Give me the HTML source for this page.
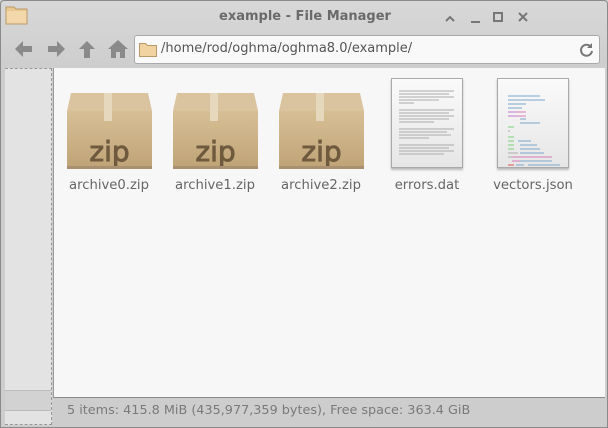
<!DOCTYPE html>
<html><head><meta charset="utf-8"><style>
*{margin:0;padding:0;box-sizing:border-box}
body{width:608px;height:428px;overflow:hidden;background:#d0d0d0;font-family:"DejaVu Sans","Liberation Sans",sans-serif;position:relative}
.win{position:absolute;left:0;top:0;width:608px;height:428px;border:1px solid #8a8a8a;border-radius:4px 4px 0 0;background:linear-gradient(#d8d8d8,#cdcdcd 70px,#cdcdcd)}
.title{position:absolute;top:8px;left:0;width:608px;text-align:center;font-size:13px;font-weight:bold;color:#6a6a6a}
.addr{position:absolute;left:133px;top:34px;width:466px;height:29px;background:#f9f9f9;border:1px solid #aaa;border-radius:3px}
.addr span{position:absolute;left:26px;top:5px;font-size:13px;color:#555}
.side{position:absolute;left:4px;top:67px;width:47px;height:357px;background:#e3e3e3;border-top:1px dashed #999;border-right:1px dashed #999;border-bottom:1px dashed #999}
.sidedark{position:absolute;left:4px;top:389px;width:46px;height:21px;background:#d2d2d2;border-top:1px solid #bbb;border-bottom:1px solid #bbb}
.main{position:absolute;left:52px;top:67px;width:552px;height:330px;background:#f7f7f7;border-left:1px solid #999;border-bottom:1px solid #8a8a8a}
.status{position:absolute;left:66px;top:402px;font-size:12.8px;color:#7a7a7a}
.lbl{position:absolute;top:177px;font-size:13.2px;color:#666;text-align:center;width:110px}
.zip{position:absolute;top:92px;width:85px;height:76px}
.doc{position:absolute;top:77px;width:72px;height:90px;background:linear-gradient(#fafafa,#e6e6e6);border:1px solid #aaa;box-shadow:0 2px 2px rgba(0,0,0,.25)}
</style></head><body>
<div class="win">
<svg style="position:absolute;left:4px;top:4px" width="24" height="20"><path d="M1 2h8l2 2h11v15H1z" fill="#e9c891" stroke="#b89a68"/><rect x="1.5" y="6" width="20" height="12.5" fill="#f2d8aa"/></svg>
<div class="title">example - File Manager</div>
<svg style="position:absolute;left:440px;top:6px" width="165" height="20" stroke="#777" stroke-width="2" fill="none"><path d="M5 14l4-4 4 4"/><path d="M30 15h9"/><rect x="53" y="6" width="8" height="8"/><path d="M78 6l8 8M86 6l-8 8"/></svg>
<svg style="position:absolute;left:12px;top:37px" width="118" height="22" fill="#8a8a8a"><path d="M2 11l8-8v5h9v6h-9v5z"/><path d="M52 11l-8-8v5h-9v6h9v5z"/><path d="M74 3l8 8h-5v9h-6v-9h-5z"/><path d="M105 2l-10 9h3v9h5v-6h4v6h5v-9h3z"/></svg>
<div class="addr"><svg style="position:absolute;left:4px;top:6px" width="18" height="15"><path d="M0.5 1.5h6l2 2h9v11H.5z" fill="#f0d3a0" stroke="#b89a68"/></svg><span>/home/rod/oghma/oghma8.0/example/</span>
<svg style="position:absolute;left:444px;top:6px" width="16" height="16" fill="none" stroke="#777" stroke-width="2"><path d="M12 5a5.5 5.5 0 1 0 1 4"/><path d="M13 1v5H8z" fill="#777" stroke="none"/></svg></div>
<div class="side"></div>
<div class="sidedark"></div>
<div class="main"></div>
<svg class="zip" style="left:66px" viewBox="0 0 85 76"><defs><linearGradient id="g" x1="0" y1="0" x2="0" y2="1"><stop offset="0" stop-color="#d7bf95"/><stop offset="1" stop-color="#c0a478"/></linearGradient></defs><path d="M4 0h77l4 18H0z" fill="#d9c49f"/><rect x="0" y="18" width="85" height="56" fill="url(#g)"/><rect x="37" y="0" width="8" height="28" fill="#e6d8bd"/><text x="42.5" y="68" text-anchor="middle" font-family="DejaVu Sans" font-size="28" fill="#6f5a3e" stroke="#6f5a3e" stroke-width="0.9">zip</text><rect x="0" y="73" width="85" height="3" fill="#a89070"/></svg>
<svg class="zip" style="left:172px" viewBox="0 0 85 76"><path d="M4 0h77l4 18H0z" fill="#d9c49f"/><rect x="0" y="18" width="85" height="56" fill="url(#g)"/><rect x="37" y="0" width="8" height="28" fill="#e6d8bd"/><text x="42.5" y="68" text-anchor="middle" font-family="DejaVu Sans" font-size="28" fill="#6f5a3e" stroke="#6f5a3e" stroke-width="0.9">zip</text><rect x="0" y="73" width="85" height="3" fill="#a89070"/></svg>
<svg class="zip" style="left:278px" viewBox="0 0 85 76"><path d="M4 0h77l4 18H0z" fill="#d9c49f"/><rect x="0" y="18" width="85" height="56" fill="url(#g)"/><rect x="37" y="0" width="8" height="28" fill="#e6d8bd"/><text x="42.5" y="68" text-anchor="middle" font-family="DejaVu Sans" font-size="28" fill="#6f5a3e" stroke="#6f5a3e" stroke-width="0.9">zip</text><rect x="0" y="73" width="85" height="3" fill="#a89070"/></svg>
<div class="doc" style="left:390px"><svg width="72" height="90" stroke="#aaa" stroke-width="1"><path d="M7 12h55M7 15h50M7 18h55M7 21h40M7 24h15M7 31h55M7 34h50M7 37h55M7 40h50M7 43h35M7 50h55M7 53h48M7 56h52M7 59h30M7 66h55M7 69h50M7 72h55M7 75h45"/></svg></div>
<div class="doc" style="left:496px"><svg width="72" height="90" stroke-width="1"><g stroke="#7aa8cc"><path d="M10 17h32M10 21h37M10 25h18M10 29h14M22 40h6M22 44h20M20 62h13M22 66h17M22 70h20M22 74h24M22 82h32"/></g><g stroke="#c07ad0"><path d="M10 33h8M10 37h8"/></g><g stroke="#d87ab8"><path d="M18 33h10M18 37h10M14 78h40M14 82h8"/></g><g stroke="#7ad07a"><path d="M10 48h6M10 58h6M10 62h6M10 66h6M10 70h6"/></g><g stroke="#aaa"><path d="M10 52h2M10 74h10M10 78h4"/></g><path d="M10 86h6" stroke="#e05050"/><path d="M18 86h8M30 86h32" stroke="#7aa8cc"/></svg></div>
<div class="lbl" style="left:53px">archive0.zip</div>
<div class="lbl" style="left:159px">archive1.zip</div>
<div class="lbl" style="left:265px">archive2.zip</div>
<div class="lbl" style="left:371px">errors.dat</div>
<div class="lbl" style="left:477px">vectors.json</div>
<div class="status">5 items: 415.8 MiB (435,977,359 bytes), Free space: 363.4 GiB</div>
</div>
</body></html>
